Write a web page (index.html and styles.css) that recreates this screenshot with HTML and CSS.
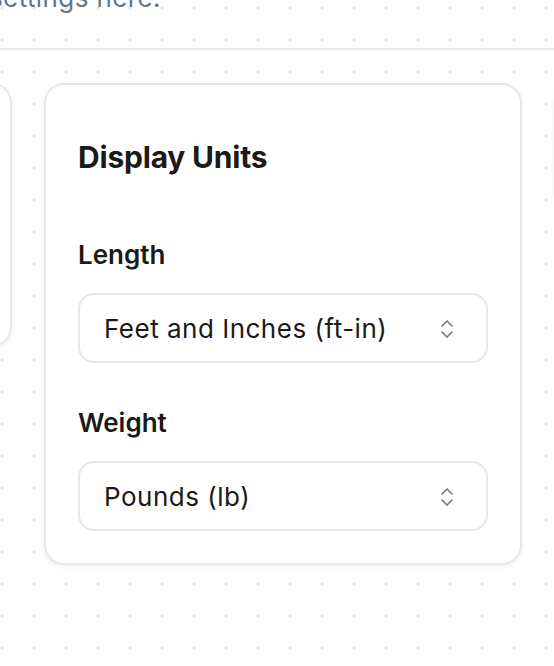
FILE: index.html
```html
<!DOCTYPE html>
<html lang="en">
<head>
<meta charset="utf-8">
<title>Settings</title>
<link rel="stylesheet" href="styles.css">
</head>
<body>
<div class="page">
  <header class="page-header">
    <div class="intro-wrap">
      <p class="intro">Manage your display settings here.</p>
    </div>
  </header>
  <div class="cards">
    <section class="card card-short">
      <h2 class="card-title">Appearance</h2>
      <div class="field field-tight">
        <label class="field-label">Theme</label>
        <div class="select"><span class="select-value">System</span></div>
      </div>
    </section>
    <section class="card">
      <h2 class="card-title">Display Units</h2>
      <div class="field">
        <label class="field-label">Length</label>
        <div class="select">
          <span class="select-value">Feet and Inches (ft-in)</span>
          <svg class="chev" viewBox="0 0 24 24" width="24" height="24" fill="none" stroke="currentColor" stroke-width="1.6" stroke-linecap="round" stroke-linejoin="round"><path d="m7 15 5 5 5-5"/><path d="m7 9 5-5 5 5"/></svg>
        </div>
      </div>
      <div class="field">
        <label class="field-label">Weight</label>
        <div class="select">
          <span class="select-value">Pounds (lb)</span>
          <svg class="chev" viewBox="0 0 24 24" width="24" height="24" fill="none" stroke="currentColor" stroke-width="1.6" stroke-linecap="round" stroke-linejoin="round"><path d="m7 15 5 5 5-5"/><path d="m7 9 5-5 5 5"/></svg>
        </div>
      </div>
    </section>
    <section class="card">
      <h2 class="card-title">Notifications</h2>
    </section>
  </div>
</div>
</body>
</html>
```

FILE: styles.css
```css
html, body {
  margin: 0;
  padding: 0;
}
body {
  width: 554px;
  height: 666px;
  overflow: hidden;
  font-family: Inter, "Noto Sans", sans-serif;
  color: #1c1917;
  background-color: #ffffff;
  background-image: radial-gradient(circle, #e2e8f0 1.4px, transparent 1.9px);
  background-size: 32px 32px;
  background-position: -14px -8px;
}
.page {
  width: 554px;
}
.page-header {
  height: 48px;
  border-bottom: 2px solid #e2e8f0;
  overflow: hidden;
}
.intro-wrap {
  width: 161px;
  display: flex;
  justify-content: flex-end;
}
.intro {
  flex: none;
  margin: -16px 0 0;
  font-size: 26px;
  line-height: 28px;
  letter-spacing: 0.4px;
  color: #64748b;
  white-space: nowrap;
}
.cards {
  display: flex;
  align-items: flex-start;
  gap: 32px;
  margin: 33px 0 0 -466px;
}
.card {
  flex: 0 0 478px;
  box-sizing: border-box;
  background: #ffffff;
  border: 2px solid #e2e8f0;
  border-radius: 20px;
  padding: 32px;
  box-shadow: 0 2px 5px rgba(15, 23, 42, 0.06);
}
.card-short {
  height: 264px;
}
.card-title {
  margin: 22px 0 0;
  font-size: 30px;
  line-height: 36px;
  font-weight: 700;
  letter-spacing: -0.2px;
}
.field {
  display: flex;
  flex-direction: column;
  gap: 22px;
  margin-top: 44px;
}
.card-title + .field {
  margin-top: 64px;
}
.card-title + .field-tight {
  margin-top: 16px;
}
.field-label {
  font-size: 26px;
  line-height: 32px;
  font-weight: 600;
  letter-spacing: 0;
}
.select {
  box-sizing: border-box;
  height: 70px;
  display: flex;
  align-items: center;
  justify-content: space-between;
  padding: 1px 27px 0 24px;
  border: 2px solid #e2e8f0;
  border-radius: 16px;
  background: #ffffff;
}
.select-value {
  font-size: 26px;
  line-height: 32px;
  font-weight: 400;
  letter-spacing: 0.5px;
}
.chev {
  display: block;
  color: #78716c;
}
```
